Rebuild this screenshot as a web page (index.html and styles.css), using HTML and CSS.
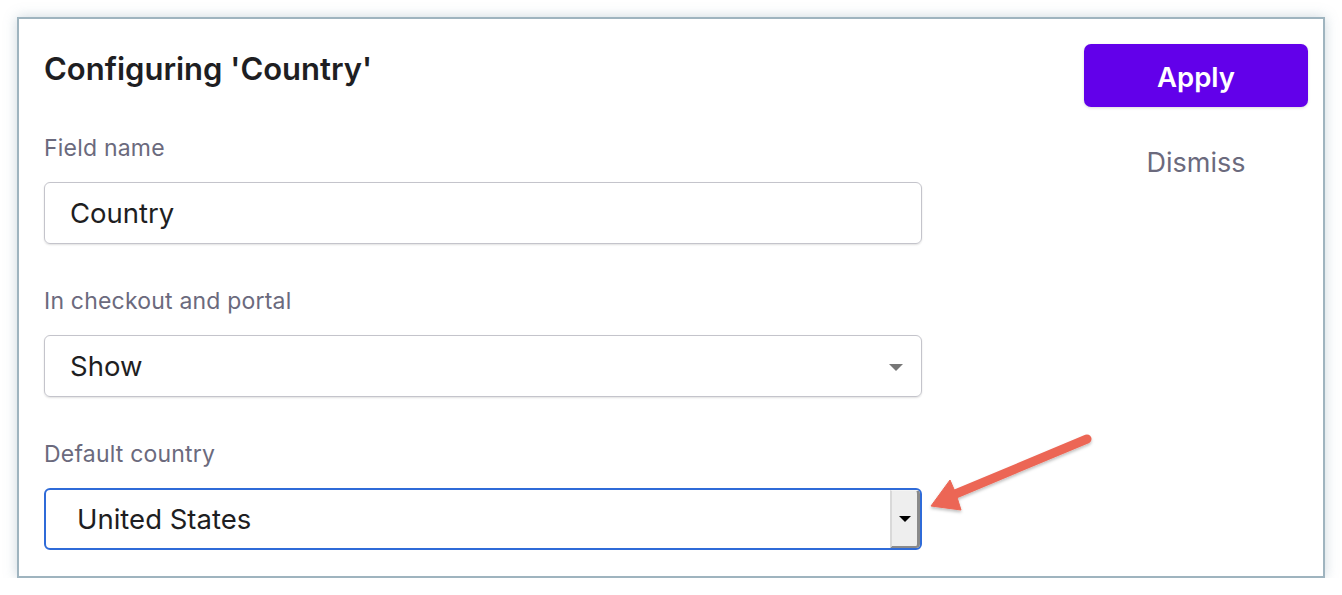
FILE: index.html
```html
<!DOCTYPE html>
<html>
<head>
<meta charset="utf-8">
<link rel="stylesheet" href="styles.css">
</head>
<body>
<div class="frame">
  <div class="main">
    <h1 class="title">Configuring 'Country'</h1>
    <div class="field">
      <div class="label">Field name</div>
      <div class="control">Country</div>
    </div>
    <div class="field">
      <div class="label">In checkout and portal</div>
      <div class="control select">Show<span class="caret"></span></div>
    </div>
    <div class="field">
      <div class="label">Default country</div>
      <div class="control native">United States<span class="native-btn"><span class="native-caret"></span></span></div>
    </div>
  </div>
  <div class="side">
    <div class="apply">Apply</div>
    <div class="dismiss">Dismiss</div>
  </div>
  <svg class="pointer" width="200" height="100" viewBox="920 425 200 100">
    <defs>
      <filter id="sh" x="-20%" y="-20%" width="140%" height="160%">
        <feDropShadow dx="0" dy="2" stdDeviation="1.5" flood-color="#000" flood-opacity="0.25"/>
      </filter>
    </defs>
    <g filter="url(#sh)" fill="#ec6655" stroke="#ec6655">
      <line x1="1089" y1="439" x2="955" y2="495" stroke-width="9" stroke-linecap="round"/>
      <polygon points="933,506 952,480 958,494 963,510" stroke-width="1" stroke-linejoin="round"/>
    </g>
  </svg>
</div>
</body>
</html>
```
FILE: styles.css
```css
* { box-sizing: border-box; }
html, body { margin: 0; padding: 0; background: #fff; }
body { font-family: Inter, "Noto Sans", sans-serif; color: #1f1f24; }
.frame {
  position: relative;
  margin: 17px 0 0 17px;
  width: 1308px;
  height: 561px;
  border: 2px solid #9fb4bf;
  box-shadow: 0 0 12px rgba(110, 140, 160, 0.35);
  display: grid;
  grid-template-columns: 878px 1fr;
  padding: 25px 15px 25px 25px;
  background: #fff;
}
.title {
  margin: 0;
  font-size: 31px;
  font-weight: 600;
  line-height: 50px;
  height: 50px;
  color: #1e1e22;
}
.field { margin-top: 41px; }
.field + .field { margin-top: 44px; }
.label {
  font-size: 23px;
  line-height: 26px;
  letter-spacing: 0.2px;
  color: #6b6a7d;
  margin-bottom: 21px;
}
.control {
  position: relative;
  height: 62px;
  border: 1px solid #c4c4cb;
  border-radius: 6px;
  box-shadow: 0 1px 2px rgba(0,0,0,0.12);
  padding-left: 25px;
  font-size: 27.5px;
  line-height: 61px;
  color: #1e1e22;
}
.caret {
  position: absolute;
  right: 18px;
  top: 28px;
  width: 0; height: 0;
  border-left: 7px solid transparent;
  border-right: 7px solid transparent;
  border-top: 7px solid #777;
}
.control.native {
  border: 2px solid #2f6bd8;
  padding-left: 31px;
  line-height: 59px;
  box-shadow: none;
}
.native-btn {
  position: absolute;
  right: 0; top: 0; bottom: 0;
  width: 30px;
  background: #eeeeee;
  border-left: 2px solid #d9d9d9;
  border-right: 3px solid #8a8a8a;
  border-bottom: 2px solid #8a8a8a;
  border-top: 1px solid #f4f4f4;
  border-radius: 0 4px 4px 0;
}
.native-caret {
  position: absolute;
  left: 7px;
  top: 25px;
  width: 0; height: 0;
  border-left: 6px solid transparent;
  border-right: 6px solid transparent;
  border-top: 6px solid #000;
}
.side {
  display: flex;
  flex-direction: column;
  align-items: flex-end;
}
.apply {
  width: 224px;
  height: 63px;
  padding-top: 3px;
  background: #6200ea;
  border-radius: 7px;
  box-shadow: 0 1px 3px rgba(0,0,0,0.15);
  color: #fff;
  font-size: 27.5px;
  font-weight: 600;
  line-height: 60px;
  text-align: center;
}
.dismiss {
  width: 224px;
  text-align: center;
  margin-top: 40px;
  font-size: 27px;
  line-height: 32px;
  color: #6b6a7d;
}
.pointer {
  position: absolute;
  left: 899px;
  top: 406px;
}
```
